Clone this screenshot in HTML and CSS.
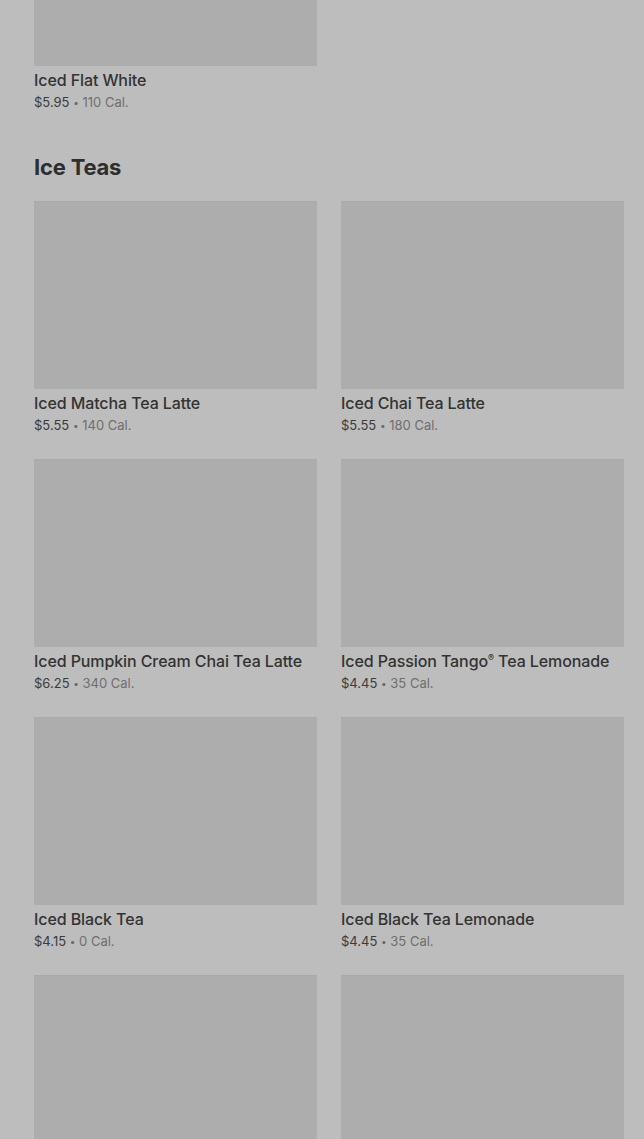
FILE: index.html
```html
<!DOCTYPE html>
<html lang="en">
<head>
  <meta charset="UTF-8">
  <meta name="viewport" content="width=device-width, initial-scale=1.0">
  <title>Menu - Iced Drinks</title>
  <link rel="stylesheet" href="styles.css">
</head>
<body>

<div class="menu">
  <section class="category category-prev">
    <div class="grid">
      <div class="card">
        <div class="thumb"></div>
        <div class="name">Iced Flat White</div>
        <div class="meta"><span class="price">$5.95</span> <span class="dot">•</span> <span class="cal">110 Cal.</span></div>
      </div>
    </div>
  </section>

  <section class="category">
    <h2>Ice Teas</h2>
    <div class="grid">
      <div class="card">
        <div class="thumb"></div>
        <div class="name">Iced Matcha Tea Latte</div>
        <div class="meta"><span class="price">$5.55</span> <span class="dot">•</span> <span class="cal">140 Cal.</span></div>
      </div>
      <div class="card">
        <div class="thumb"></div>
        <div class="name">Iced Chai Tea Latte</div>
        <div class="meta"><span class="price">$5.55</span> <span class="dot">•</span> <span class="cal">180 Cal.</span></div>
      </div>
      <div class="card">
        <div class="thumb"></div>
        <div class="name">Iced Pumpkin Cream Chai Tea Latte</div>
        <div class="meta"><span class="price">$6.25</span> <span class="dot">•</span> <span class="cal">340 Cal.</span></div>
      </div>
      <div class="card">
        <div class="thumb"></div>
        <div class="name">Iced Passion Tango<sup>®</sup> Tea Lemonade</div>
        <div class="meta"><span class="price">$4.45</span> <span class="dot">•</span> <span class="cal">35 Cal.</span></div>
      </div>
      <div class="card">
        <div class="thumb"></div>
        <div class="name">Iced Black Tea</div>
        <div class="meta"><span class="price">$4.15</span> <span class="dot">•</span> <span class="cal">0 Cal.</span></div>
      </div>
      <div class="card">
        <div class="thumb"></div>
        <div class="name">Iced Black Tea Lemonade</div>
        <div class="meta"><span class="price">$4.45</span> <span class="dot">•</span> <span class="cal">35 Cal.</span></div>
      </div>
      <div class="card">
        <div class="thumb"></div>
        <div class="name">Iced Green Tea</div>
        <div class="meta"><span class="price">$4.15</span> <span class="dot">•</span> <span class="cal">0 Cal.</span></div>
      </div>
      <div class="card">
        <div class="thumb"></div>
        <div class="name">Iced Green Tea Lemonade</div>
        <div class="meta"><span class="price">$4.45</span> <span class="dot">•</span> <span class="cal">45 Cal.</span></div>
      </div>
    </div>
  </section>
</div>

</body>
</html>
```

FILE: styles.css
```css
html, body {
  height: 100%;
  overflow: hidden;
}

body {
  margin: 0;
  background: #bdbdbd;
  font-family: Inter, Roboto, "Liberation Sans", sans-serif;
  color: #303030;
}

.menu {
  padding: 0 20px 0 34px;
}

/* page is scrolled part way into the previous category */
.category-prev {
  margin-top: -122px;
}

h2 {
  margin: 39px 0 18px;
  font-size: 22px;
  line-height: 32px;
  font-weight: 700;
  letter-spacing: -0.2px;
  color: #2e2e2e;
}

.grid {
  display: grid;
  grid-template-columns: 283px 283px;
  column-gap: 24px;
  row-gap: 24px;
}

.thumb {
  height: 188px;
  background: #adadad;
  border-top: 1px solid #a9a9a9;
  box-sizing: border-box;
}

.name {
  margin-top: 2px;
  font-size: 16px;
  line-height: 24px;
  font-weight: 500;
  letter-spacing: -0.1px;
  color: #333;
}

.name sup {
  font-size: 9px;
  line-height: 0;
  vertical-align: 6px;
}

.meta {
  font-size: 13px;
  line-height: 20px;
}

.price {
  color: #3c3c3c;
}

.dot {
  font-size: 10px;
  line-height: 0;
  vertical-align: 1px;
  color: #6a6a6a;
}

.cal {
  color: #6f6f6f;
}
```
